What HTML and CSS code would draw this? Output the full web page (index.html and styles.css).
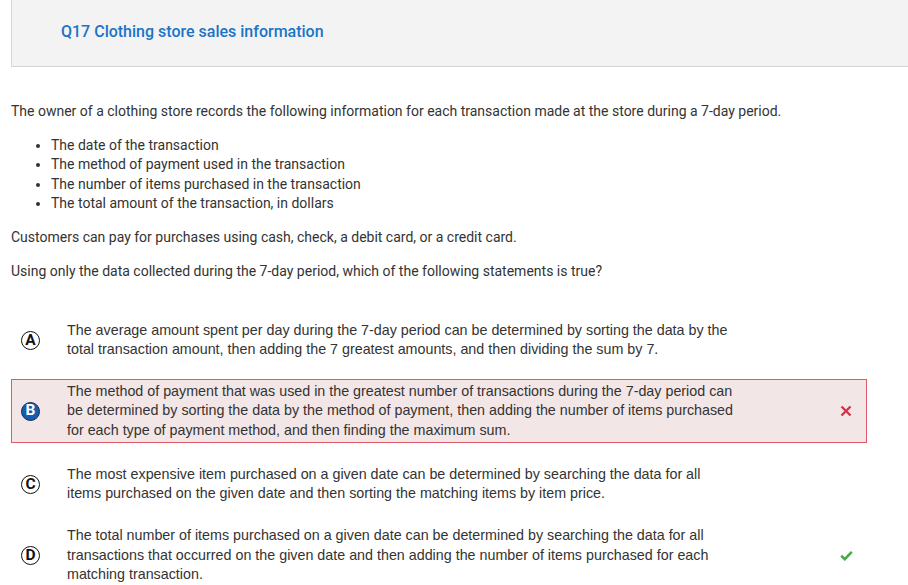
FILE: index.html
```html
<!DOCTYPE html>
<html>
<head>
<meta charset="utf-8">
<link rel="stylesheet" href="styles.css">
</head>
<body>
<div class="page">
  <header class="qhead">
    <h1 class="qtitle">Q17 Clothing store sales information</h1>
  </header>
  <div class="stem">
    <p>The owner of a clothing store records the following information for each transaction made at the store during a 7-day period.</p>
    <ul>
      <li>The date of the transaction</li>
      <li>The method of payment used in the transaction</li>
      <li>The number of items purchased in the transaction</li>
      <li>The total amount of the transaction, in dollars</li>
    </ul>
    <p>Customers can pay for purchases using cash, check, a debit card, or a credit card.</p>
    <p>Using only the data collected during the 7-day period, which of the following statements is true?</p>
  </div>
  <div class="options">
    <div class="opt">
      <span class="letter">A</span>
      <div class="otext">The average amount spent per day during the 7-day period can be determined by sorting the data by the total transaction amount, then adding the 7 greatest amounts, and then dividing the sum by 7.</div>
      <span class="mark"></span>
    </div>
    <div class="opt wrong">
      <span class="letter sel">B</span>
      <div class="otext">The method of payment that was used in the greatest number of transactions during the 7-day period can be determined by sorting the data by the method of payment, then adding the number of items purchased for each type of payment method, and then finding the maximum sum.</div>
      <span class="mark"><svg width="12" height="12" viewBox="0 0 12 12"><path d="M1.5 1.5 L10.5 10.5 M10.5 1.5 L1.5 10.5" stroke="#d1344a" stroke-width="2.4" fill="none"/></svg></span>
    </div>
    <div class="opt after-wrong">
      <span class="letter">C</span>
      <div class="otext">The most expensive item purchased on a given date can be determined by searching the data for all items purchased on the given date and then sorting the matching items by item price.</div>
      <span class="mark"></span>
    </div>
    <div class="opt">
      <span class="letter">D</span>
      <div class="otext">The total number of items purchased on a given date can be determined by searching the data for all transactions that occurred on the given date and then adding the number of items purchased for each matching transaction.</div>
      <span class="mark"><svg width="13" height="11" viewBox="0 0 13 11"><path d="M1.2 5.8 L4.8 9.2 L11.8 1.8" stroke="#4aaa4a" stroke-width="2.6" fill="none"/></svg></span>
    </div>
  </div>
</div>
</body>
</html>
```
FILE: styles.css
```css
html, body {
  margin: 0;
  padding: 0;
  background: #ffffff;
}
.page {
  padding-left: 11px;
  font-family: Roboto, "Liberation Sans", sans-serif;
  color: #333333;
}
.qhead {
  height: 66px;
  background: #f3f3f3;
  border-left: 1px solid #d6d6d6;
  border-bottom: 1px solid #d6d6d6;
  display: flex;
  align-items: center;
  padding-left: 49px;
}
.qtitle {
  margin: 0 0 2px 0;
  font-size: 16px;
  font-weight: 500;
  color: #1b74c6;
  line-height: 20px;
}
.stem {
  font-size: 14px;
  line-height: 19.4px;
  padding-top: 35px;
}
.stem p {
  margin: 0 0 14.5px 0;
}
.stem ul {
  margin: 0 0 14.5px 0;
  padding-left: 40px;
}
.options {
  padding-top: 22px;
  width: 856px;
  display: flex;
  flex-direction: column;
  gap: 16.5px;
  font-family: "Liberation Sans", Arial, sans-serif;
  font-size: 14.3px;
  line-height: 19.5px;
  color: #333333;
}
.opt {
  display: flex;
  align-items: center;
  border: 1px solid transparent;
  padding: 2px 13px 2px 9px;
}
.opt.wrong {
  background: #f3e6e6;
  border-color: #de5a6a;
  padding-top: 1.5px;
  padding-bottom: 1.5px;
}
.opt.after-wrong {
  margin-top: 2.5px;
}
.letter {
  flex: none;
  box-sizing: border-box;
  width: 19px;
  height: 19px;
  border: 1.5px solid #111111;
  border-radius: 50%;
  display: flex;
  align-items: center;
  justify-content: center;
  font-family: Roboto, "Liberation Sans", sans-serif;
  font-weight: 700;
  font-size: 15.5px;
  line-height: 1;
  color: #111111;
  background: #ffffff;
  margin-right: 27px;
}
.letter.sel {
  background: #1a5bab;
  border-color: #0d2f5c;
  color: #ffffff;
}
.otext {
  width: 670px;
  flex: none;
}
.mark {
  margin-left: auto;
  width: 14px;
  display: flex;
  justify-content: center;
  align-items: center;
}
```
